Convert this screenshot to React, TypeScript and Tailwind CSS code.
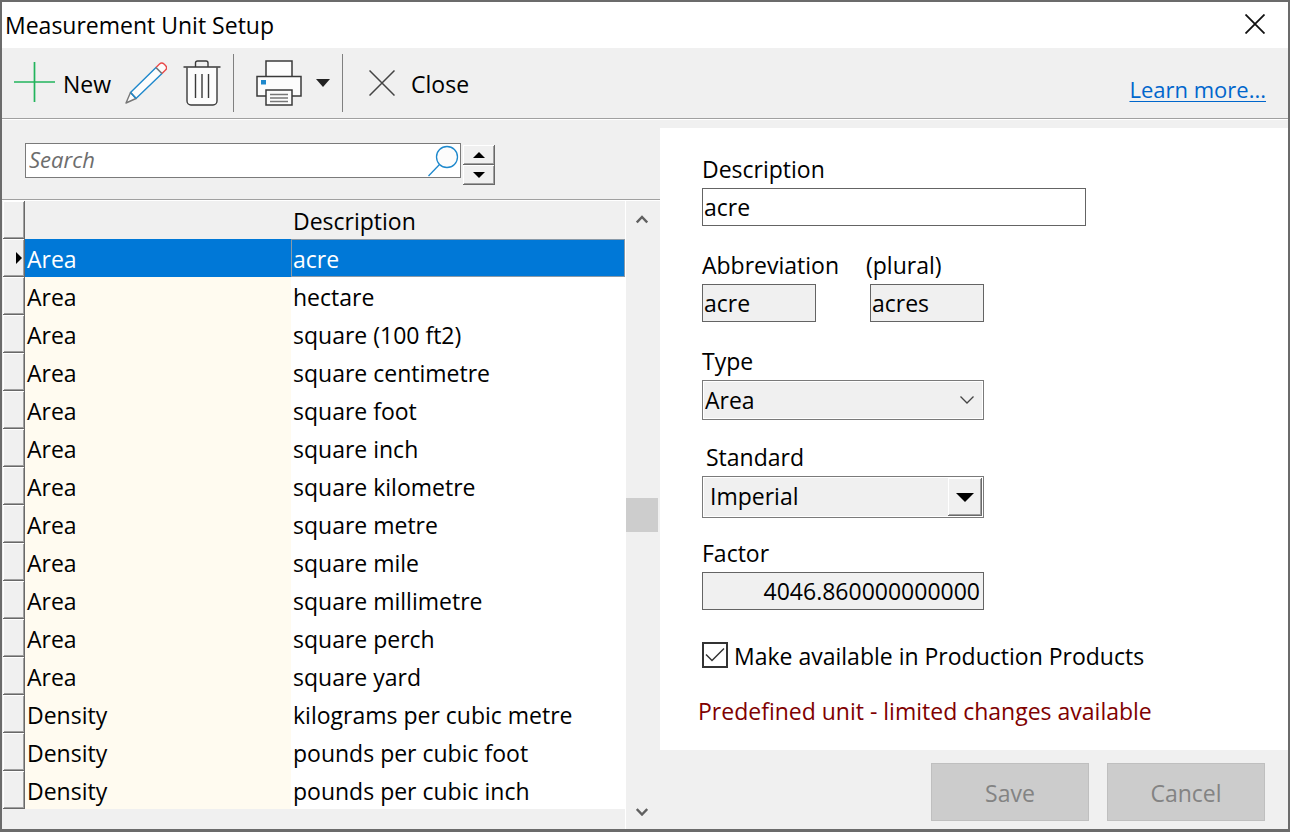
import { useState } from 'react'
import type { ReactNode } from 'react'
import clsx from 'clsx'

interface Unit {
  type: string
  description: string
}

const UNITS: Unit[] = [
  { type: 'Area', description: 'acre' },
  { type: 'Area', description: 'hectare' },
  { type: 'Area', description: 'square (100 ft2)' },
  { type: 'Area', description: 'square centimetre' },
  { type: 'Area', description: 'square foot' },
  { type: 'Area', description: 'square inch' },
  { type: 'Area', description: 'square kilometre' },
  { type: 'Area', description: 'square metre' },
  { type: 'Area', description: 'square mile' },
  { type: 'Area', description: 'square millimetre' },
  { type: 'Area', description: 'square perch' },
  { type: 'Area', description: 'square yard' },
  { type: 'Density', description: 'kilograms per cubic metre' },
  { type: 'Density', description: 'pounds per cubic foot' },
  { type: 'Density', description: 'pounds per cubic inch' },
]

const RAISED = 'bg-[#f0f0f0] shadow-[inset_-1px_-1px_0_#696969,inset_1px_1px_0_#fff,inset_-2px_-2px_0_#a0a0a0]'
const INPUT = 'block h-[38px] border border-[#646464] pl-px pr-[3px] outline-none'

function PlusIcon() {
  return (
    <svg width="42" height="42" viewBox="0 0 42 42" fill="none" stroke="#22b45c" strokeWidth="1.7">
      <path d="M20.5 0v40M0 20h41" />
    </svg>
  )
}

function PencilIcon() {
  return (
    <svg width="42" height="42" viewBox="0 0 42 42" fill="none" strokeWidth="1.4" strokeLinejoin="round">
      <path d="M5.500 30.500 31 5.500l6 6-26 25z" fill="#fcfcfc" stroke="#1e88cc" />
      <path d="M5.500 30.500 1 41l10-4.500z" fill="#fcfcfc" stroke="#777" />
      <path d="m5.500 30.500 5.500 6" stroke="#1e88cc" />
      <path d="m31 5.500 3.500-3.500a3.200 3.200 0 0 1 4.500 0l1.500 1.500a3.200 3.200 0 0 1 0 4.500L37 11.500" fill="#fcfcfc" stroke="#e84848" />
      <path d="m31 5.500 6 6" stroke="#777" />
    </svg>
  )
}

function TrashIcon() {
  return (
    <svg width="38" height="46" viewBox="0 0 38 46" fill="none" stroke="#3a3a3a" strokeWidth="1.4">
      <path d="M4 7.500V41a4 4 0 0 0 4 4h22a4 4 0 0 0 4-4V7.500" fill="#fcfcfc" />
      <path d="M0.500 7h37M12.500 7V3a2 2 0 0 1 2-2h8.500a2 2 0 0 1 2 2v4" />
      <path d="M12.500 14v24M19 14v24M25.500 14v24" />
    </svg>
  )
}

function PrinterIcon() {
  return (
    <svg width="46" height="46" viewBox="0 0 46 46" fill="#fcfcfc" stroke="#3a3a3a" strokeWidth="1.5">
      <path d="M10 1h26v16H10z" />
      <path d="M1 16.500h44v19.500H1z" />
      <path d="M10 30h26v15H10z" />
      <path d="M14 34.500h18M14 38h18M14 41.500h18" stroke="#777" />
      <path d="M5 20h5v4.500H5z" fill="#1e88cc" stroke="none" />
    </svg>
  )
}

function CrossIcon({ size, color, weight }: { size: number; color: string; weight: number }) {
  return (
    <svg width={size} height={size} viewBox={`0 0 ${size} ${size}`} fill="none" stroke={color} strokeWidth={weight}>
      <path d={`M0.5 0.5 ${size - 0.5} ${size - 0.5}M${size - 0.5} 0.5 0.5 ${size - 0.5}`} />
    </svg>
  )
}

function ScrollArrow({ up }: { up?: boolean }) {
  return (
    <svg width="12" height="10" viewBox="0 0 12 10" fill="none" stroke="#606060" strokeWidth="2.4">
      <path d={up ? 'M0.8 8.500 6 3l5.200 5.500' : 'M0.8 3 6 8.500 11.200 3'} />
    </svg>
  )
}

function Divider() {
  return <div className="h-[58px] w-px bg-[#808080]" />
}

interface FieldProps {
  id: string
  label: string
  indent?: boolean
  children: ReactNode
}

function Field({ id, label, indent, children }: FieldProps) {
  return (
    <div className="h-24">
      <label htmlFor={id} className={clsx('flex h-9 items-center pb-0.5', indent && 'pl-1')}>
        {label}
      </label>
      {children}
    </div>
  )
}

function Toolbar() {
  return (
    <div className="flex h-[72px] items-center border-b border-white bg-[#f0f0f0] pb-0.5 shadow-[inset_0_-1px_0_#a0a0a0]">
      <button className="ml-3 flex items-center gap-[7px]">
        <PlusIcon />
        <span className="pt-0.5">New</span>
      </button>
      <button aria-label="Edit" className="ml-[14px]">
        <PencilIcon />
      </button>
      <button aria-label="Delete" className="ml-4 mr-3">
        <TrashIcon />
      </button>
      <Divider />
      <button aria-label="Print" className="ml-[22px]">
        <PrinterIcon />
      </button>
      <button aria-label="Print options" className="ml-[14px] mr-3">
        <svg width="14" height="8" viewBox="0 0 14 8" fill="#222">
          <path d="M0 0h14L7 8z" />
        </svg>
      </button>
      <Divider />
      <button className="ml-[26px] flex items-center gap-4">
        <CrossIcon size={26} color="#444" weight={1.5} />
        <span className="pt-0.5">Close</span>
      </button>
      <a
        href="#learn-more"
        className="ml-auto mr-[22px] mt-3 text-[22px] text-[#0066cc] underline decoration-1 underline-offset-3"
      >
        Learn more...
      </a>
    </div>
  )
}

function SearchBar() {
  return (
    <div className="flex h-[81px] items-start gap-0.5 border-b border-white pl-[23px] pt-[23px] shadow-[inset_0_-1px_0_#a0a0a0]">
      <div className="flex h-[35px] w-[436px] items-center border border-[#7a7a7a] bg-white">
        <input
          type="text"
          aria-label="Search"
          placeholder="Search"
          className="h-full min-w-0 flex-1 px-[3px] pb-1 text-[22px] italic outline-none placeholder:text-[#6d6d6d]"
        />
        <svg width="32" height="32" viewBox="0 0 32 32" fill="none" stroke="#1e88cc" strokeWidth="1.3">
          <circle cx="19" cy="12" r="10.500" fill="#fcfcfc" />
          <path d="M11.500 19.500 0.500 31" />
        </svg>
      </div>
      <div className="flex flex-col pt-0.5">
        <button aria-label="Previous" className={clsx('flex h-5 w-8 items-center justify-center', RAISED)}>
          <svg width="12" height="6" viewBox="0 0 12 6">
            <path d="M0 6h12L6 0z" />
          </svg>
        </button>
        <button aria-label="Next" className={clsx('flex h-5 w-8 items-center justify-center', RAISED)}>
          <svg width="12" height="6" viewBox="0 0 12 6">
            <path d="M0 0h12L6 6z" />
          </svg>
        </button>
      </div>
    </div>
  )
}

function UnitTable({ selected, onSelect }: { selected: number; onSelect: (index: number) => void }) {
  return (
    <table className="w-[622px] table-fixed border-collapse text-left">
      <thead>
        <tr className="h-[38px]">
          <th className={clsx('w-[22px] p-0', RAISED)} />
          <th className="w-[266px] p-0" />
          <th scope="col" className="p-0 pl-0.5 pt-0.5 font-normal">
            Description
          </th>
        </tr>
      </thead>
      <tbody>
        {UNITS.map((unit, i) => {
          const active = i === selected
          return (
            <tr
              key={unit.description}
              onClick={() => onSelect(i)}
              className={clsx('h-[38px]', active ? 'bg-[#0078d7] text-white' : 'bg-white')}
            >
              <td className={clsx('p-0', RAISED)}>
                {active && (
                  <svg className="ml-auto mr-[3px]" width="6" height="12" viewBox="0 0 6 12">
                    <path d="M0 0v12L6 6z" />
                  </svg>
                )}
              </td>
              <td className={clsx('p-0 pl-0.5 pt-0.5', !active && 'bg-[#fffbf0]')}>{unit.type}</td>
              <td className={clsx('p-0 pl-0.5 pt-0.5', active && 'shadow-[inset_0_0_0_1px_#8a9aa8]')}>
                {unit.description}
              </td>
            </tr>
          )
        })}
      </tbody>
    </table>
  )
}

function Scrollbar() {
  return (
    <div className="flex flex-1 flex-col border-l border-white">
      <button aria-label="Scroll up" className="flex h-9 w-8 items-center justify-center">
        <ScrollArrow up />
      </button>
      <div className="flex flex-1 flex-col justify-center">
        <div className="h-[34px] w-8 bg-[#cdcdcd]" />
      </div>
      <button aria-label="Scroll down" className="flex h-9 w-8 items-center justify-center">
        <ScrollArrow />
      </button>
    </div>
  )
}

function UnitForm() {
  const [available, setAvailable] = useState(true)

  return (
    <div className="h-[622px] bg-white pl-[38px] pt-6">
      <div className="pl-1">
        <Field id="description" label="Description">
          <input id="description" type="text" defaultValue="acre" className={clsx(INPUT, 'w-96 bg-white')} />
        </Field>

        <div className="flex">
          <div className="w-[164px]">
            <Field id="abbreviation" label="Abbreviation">
              <input id="abbreviation" type="text" readOnly value="acre" className={clsx(INPUT, 'w-[114px] bg-[#f0f0f0]')} />
            </Field>
          </div>
          <Field id="plural" label="(plural)">
            <div className="pl-1">
              <input id="plural" type="text" readOnly value="acres" className={clsx(INPUT, 'w-[114px] bg-[#f0f0f0]')} />
            </div>
          </Field>
        </div>

        <Field id="type" label="Type">
          <div className="relative w-[282px]">
            <select
              id="type"
              defaultValue="Area"
              className="block h-10 w-full appearance-none border border-[#7a7a7a] bg-[#f0f0f0] px-0.5 shadow-[inset_0_0_0_1px_#fff] outline-none"
            >
              <option>Area</option>
              <option>Density</option>
            </select>
            <svg
              className="pointer-events-none absolute right-2.5 top-4"
              width="14"
              height="8"
              viewBox="0 0 14 8"
              fill="none"
              stroke="#444"
              strokeWidth="1.3"
            >
              <path d="M0.500 0.500 7 7l6.500-6.500" />
            </svg>
          </div>
        </Field>

        <Field id="standard" label="Standard" indent>
          <div className="relative w-[282px]">
            <select
              id="standard"
              defaultValue="Imperial"
              className="block h-[42px] w-full appearance-none border border-[#7a7a7a] bg-[#f0f0f0] px-[7px] pb-0.5 shadow-[inset_0_0_0_1px_#fff] outline-none"
            >
              <option>Imperial</option>
              <option>Metric</option>
            </select>
            <span
              className={clsx(
                'pointer-events-none absolute right-0.5 top-0.5 flex h-[38px] w-[34px] items-center justify-center',
                RAISED
              )}
            >
              <svg width="18" height="9" viewBox="0 0 18 9">
                <path d="M0 0h18L9 9z" />
              </svg>
            </span>
          </div>
        </Field>

        <Field id="factor" label="Factor">
          <input
            id="factor"
            type="text"
            readOnly
            value="4046.860000000000"
            className={clsx(INPUT, 'w-[282px] bg-[#f0f0f0] text-right')}
          />
        </Field>

        <div className="flex h-12 items-center pb-0.5">
          <label className="flex items-center gap-1.5">
            <span className="relative block size-[26px]">
              <input
                type="checkbox"
                checked={available}
                onChange={(e) => setAvailable(e.target.checked)}
                className="block size-full appearance-none border-2 border-[#333] bg-white"
              />
              {available && (
                <svg
                  className="pointer-events-none absolute inset-0"
                  width="26"
                  height="26"
                  viewBox="0 0 26 26"
                  fill="none"
                  stroke="#333"
                  strokeWidth="1.5"
                >
                  <path d="m4 12.500 6 6 12-12" />
                </svg>
              )}
            </span>
            <span className="pt-0.5">Make available in Production Products</span>
          </label>
        </div>
      </div>

      <p className="flex h-16 items-center pb-0.5 text-[#800000]">Predefined unit - limited changes available</p>
    </div>
  )
}

export default function App() {
  const [selected, setSelected] = useState(0)

  return (
    <div className="flex min-h-screen flex-col border-2 border-b-3 border-[#6b6b6b] bg-[#f0f0f0] font-['Open_Sans','Noto_Sans',sans-serif] text-[23px] leading-7 text-black">
      <header className="flex h-[46px] items-center justify-between bg-white pb-0.5 pl-[3px] pr-[23px]">
        <h1 className="pt-0.5">Measurement Unit Setup</h1>
        <button aria-label="Close window">
          <CrossIcon size={20} color="#111" weight={1.8} />
        </button>
      </header>

      <Toolbar />

      <main className="flex flex-1">
        <section className="flex w-[658px] flex-col">
          <SearchBar />
          <div className="flex flex-1 items-stretch pl-px">
            <div>
              <UnitTable selected={selected} onSelect={setSelected} />
            </div>
            <Scrollbar />
          </div>
        </section>

        <section className="flex flex-1 flex-col pt-2">
          <UnitForm />
          <div className="flex justify-end gap-[18px] pr-[23px] pt-[13px]">
            <button disabled className="h-[58px] w-[158px] border border-[#bfbfbf] bg-[#cccccc] pt-0.5 text-[#838383]">
              Save
            </button>
            <button disabled className="h-[58px] w-[158px] border border-[#bfbfbf] bg-[#cccccc] pt-0.5 text-[#838383]">
              Cancel
            </button>
          </div>
        </section>
      </main>
    </div>
  )
}
